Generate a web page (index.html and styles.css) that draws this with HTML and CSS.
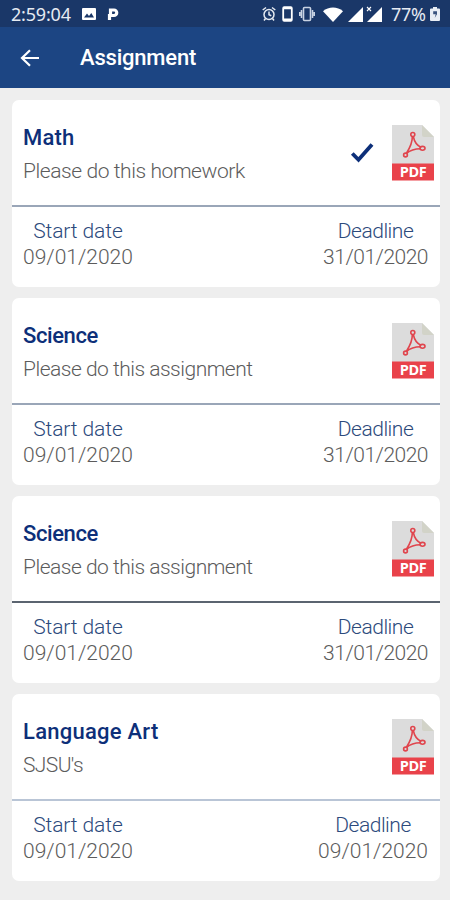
FILE: index.html
```html
<!DOCTYPE html>
<html lang="en">
<head>
    <meta charset="UTF-8">
    <title>Assignment</title>
    <meta name="viewport" content="width=device-width, initial-scale=1.0">
    <link rel="stylesheet" href="styles.css">
</head>
<body>

<!-- Shared icons -->
<svg class="sprite" width="0" height="0">
    <symbol id="pdf" viewBox="0 0 42 56">
        <path d="M0 0h30l12 12v27H0z" fill="#dcdcdc"/>
        <path d="M30 0l12 12H32q-2 0-2-2z" fill="#d2d3c8"/>
        <path d="M0 38.500h42V55.500H0z" fill="#e9424a"/>
        <g fill="none" stroke="#e0454d" stroke-width="1.600" stroke-linejoin="round">
            <circle cx="20.800" cy="9.500" r="2"/>
            <circle cx="13.500" cy="30" r="1.900"/>
            <ellipse cx="30.500" cy="23.300" rx="2.500" ry="1.900"/>
            <path d="M20.300 11.500c.2 5-2.500 11.500-6 17M21.300 11.500c1 5 3.500 9 8 11M14.500 28.500c3.500-3 8.500-4.600 14-4.700"/>
        </g>
    </symbol>
</svg>

<div class="status">
    <span class="time">2:59:04</span>
    <svg class="photo" width="14" height="12" viewBox="0 0 14 12"><rect width="14" height="12" rx="1" fill="#fff"/><path d="M2 9.500l3-4 2 2.400L9.300 5 12 9.500z" fill="#1a3768"/></svg>
    <svg class="park" width="12" height="14" viewBox="0 0 12 14"><path d="M2.500 13V7M3.500 8.500V3H7a2.700 2.700 0 010 5.500z" fill="none" stroke="#fff" stroke-width="3.200"/></svg>

    <svg class="alarm" width="14" height="16" viewBox="0 0 14 16"><g fill="none" stroke="#e6ebf2" stroke-width="1.500"><circle cx="7" cy="8.500" r="5"/><path d="M7 5.500v3.300l2.300 1M.7 4L4 1.500M13.300 4L10 1.500M3.500 12.500L2 14.500M10.500 12.500l1.500 2"/></g></svg>
    <svg class="phone" width="11" height="16" viewBox="0 0 11 16"><rect x="1.200" y="1.200" width="8.600" height="13.600" rx="1" fill="none" stroke="#fff" stroke-width="1.800"/><path d="M1 2.200h9M1 13.500h9" stroke="#fff" stroke-width="2"/></svg>
    <svg class="vibrate" width="16" height="16" viewBox="0 0 16 16"><g fill="none" stroke="#c9d3e3" stroke-width="1.600"><rect x="4.500" y="1.500" width="7" height="13" rx="1"/><path d="M2.500 4v8M13.500 4v8M.8 6v4M15.200 6v4"/></g></svg>
    <svg class="wifi" width="20" height="15" viewBox="0 0 20 15"><path d="M0 4.200C5.500-.6 14.500-.6 20 4.200L10 15z" fill="#fff"/></svg>
    <svg class="signal" width="15" height="15" viewBox="0 0 15 15"><path d="M0 15L15 0v15z" fill="#fff"/></svg>
    <svg class="signal-x" width="17" height="16" viewBox="0 0 17 16"><path d="M1 16L16 1v15z" fill="#fff"/><path d="M1 1l4 4M5 1L1 5" stroke="#fff" stroke-width="1.100"/></svg>
    <span class="percent">77%</span>
    <svg class="battery" width="10" height="14" viewBox="0 0 10 14"><path d="M3 0h4v1.500h2q1 0 1 1V13q0 1-1 1H1q-1 0-1-1V2.500q0-1 1-1h2z" fill="#e8edf4"/><path d="M3.200 4.200v3h2.500l-1 3.800 2.300-3.800V4.200z" fill="#39527d"/></svg>
</div>

<header>
    <svg width="20" height="18" viewBox="0 0 20 18"><path d="M19 9H2.500M10 1.300L2 9l8 7.700" fill="none" stroke="#fff" stroke-width="2.200"/></svg>
    <h1>Assignment</h1>
</header>

<main>
    <section class="card">
        <div class="top">
            <div class="info">
                <h2 class="math">Math</h2>
                <p class="homework">Please do this homework</p>
            </div>
            <svg class="check" width="24" height="21" viewBox="0 0 24 21"><path d="M2.300 11.500L8.500 17.800 22 2.500" fill="none" stroke="#0d2f79" stroke-width="3.800"/></svg>
            <svg class="pdf" width="42" height="56"><use href="#pdf"/><text x="21" y="52">PDF</text></svg>
        </div>
        <div class="dates">
            <div class="date"><span class="label start">Start date</span><span>09/01/2020</span></div>
            <div class="date"><span class="label">Deadline</span><span class="end">31/01/2020</span></div>
        </div>
    </section>

    <section class="card">
        <div class="top">
            <div class="info">
                <h2 class="science">Science</h2>
                <p class="assignment">Please do this assignment</p>
            </div>
            <svg class="pdf" width="42" height="56"><use href="#pdf"/><text x="21" y="52">PDF</text></svg>
        </div>
        <div class="dates">
            <div class="date"><span class="label start">Start date</span><span>09/01/2020</span></div>
            <div class="date"><span class="label">Deadline</span><span class="end">31/01/2020</span></div>
        </div>
    </section>

    <section class="card dark">
        <div class="top">
            <div class="info">
                <h2 class="science">Science</h2>
                <p class="assignment">Please do this assignment</p>
            </div>
            <svg class="pdf" width="42" height="56"><use href="#pdf"/><text x="21" y="52">PDF</text></svg>
        </div>
        <div class="dates">
            <div class="date"><span class="label start">Start date</span><span>09/01/2020</span></div>
            <div class="date"><span class="label">Deadline</span><span class="end">31/01/2020</span></div>
        </div>
    </section>

    <section class="card light">
        <div class="top">
            <div class="info">
                <h2 class="language">Language Art</h2>
                <p class="sjsu">SJSU's</p>
            </div>
            <svg class="pdf" width="42" height="56"><use href="#pdf"/><text x="21" y="52">PDF</text></svg>
        </div>
        <div class="dates">
            <div class="date"><span class="label start">Start date</span><span>09/01/2020</span></div>
            <div class="date"><span class="label">Deadline</span><span>09/01/2020</span></div>
        </div>
    </section>
</main>

</body>
</html>
```

FILE: styles.css
```css
* {
    box-sizing: border-box;
}
body {
    margin: 0;
    height: 900px;
    overflow: hidden;
    background: #eeeeee;
    font-family: Roboto, "Liberation Sans", sans-serif;
}
h1, h2, p {
    margin: 0;
    white-space: nowrap;
}
svg {
    display: block;
    flex: none;
}
.sprite {
    position: absolute;
}

/* Status bar */
.status {
    display: flex;
    align-items: center;
    height: 27px;
    padding: 1px 10px 0 11px;
    background: #1a3768;
    color: #e6ebf2;
}
.time {
    width: 60px;
    font: 18px/26px "Noto Sans", sans-serif;
    letter-spacing: -0.2px;
}
.photo {
    margin-left: 11px;
}
.park {
    margin-left: 11px;
    margin-right: auto;
}
.phone {
    margin-left: 6px;
}
.vibrate {
    margin-left: 6px;
}
.wifi {
    margin-left: 8px;
}
.signal {
    margin-left: 5px;
}
.signal-x {
    margin-left: 3px;
}
.percent {
    width: 35px;
    margin-left: 8px;
    font: 18px/26px "Noto Sans", sans-serif;
    letter-spacing: -0.3px;
}
.battery {
    margin-left: 4px;
}

/* App bar */
header {
    display: flex;
    align-items: center;
    height: 61px;
    padding-left: 20px;
    background: #1c4583;
}
h1 {
    margin-left: 40px;
    color: #fff;
    font-size: 22px;
    font-weight: 500;
    letter-spacing: -0.2px;
}

/* Cards */
main {
    display: flex;
    flex-direction: column;
    gap: 11px;
    padding: 12px 10px 0 12px;
}
.card {
    height: 187px;
    border-radius: 7px;
    background: #fff;
}
.top {
    display: flex;
    height: 107px;
    margin-bottom: 1px;
    padding: 25px 6px 0 11px;
    border-bottom: 2px solid #9aa6b8;
}
.dark .top {
    border-bottom-color: #5b6470;
}
.light .top {
    border-bottom-color: #b9c5d6;
}
.info {
    flex: 1;
}
h2 {
    margin-top: -1px;
    color: #0d2f79;
    font-size: 22px;
    line-height: 28px;
    font-weight: 500;
}
.math {
    letter-spacing: 0.2px;
}
.science {
    letter-spacing: -0.4px;
}
.language {
    letter-spacing: 0.25px;
}
p {
    margin-top: 5px;
    color: #5c5c5c;
    font-size: 21px;
    line-height: 28px;
    font-weight: 300;
}
.homework {
    letter-spacing: -0.42px;
}
.assignment {
    letter-spacing: -0.5px;
}
.sjsu {
    letter-spacing: -0.6px;
}
.check {
    margin: 17px 18px 0 0;
}
.pdf text {
    fill: #fff;
    font: bold 14.5px "Open Sans", sans-serif;
    letter-spacing: -0.5px;
    text-anchor: middle;
}
.dates {
    display: flex;
    justify-content: space-between;
    padding: 10px 12px 0 11px;
}
.date {
    display: flex;
    flex-direction: column;
    align-items: center;
    color: #5c5c5c;
    font-size: 21px;
    line-height: 26px;
    font-weight: 300;
}
.label {
    color: #2c4a7c;
}
.start {
    letter-spacing: -0.1px;
}
.label:not(.start) {
    letter-spacing: -0.5px;
}
.end {
    letter-spacing: -0.5px;
}
```
